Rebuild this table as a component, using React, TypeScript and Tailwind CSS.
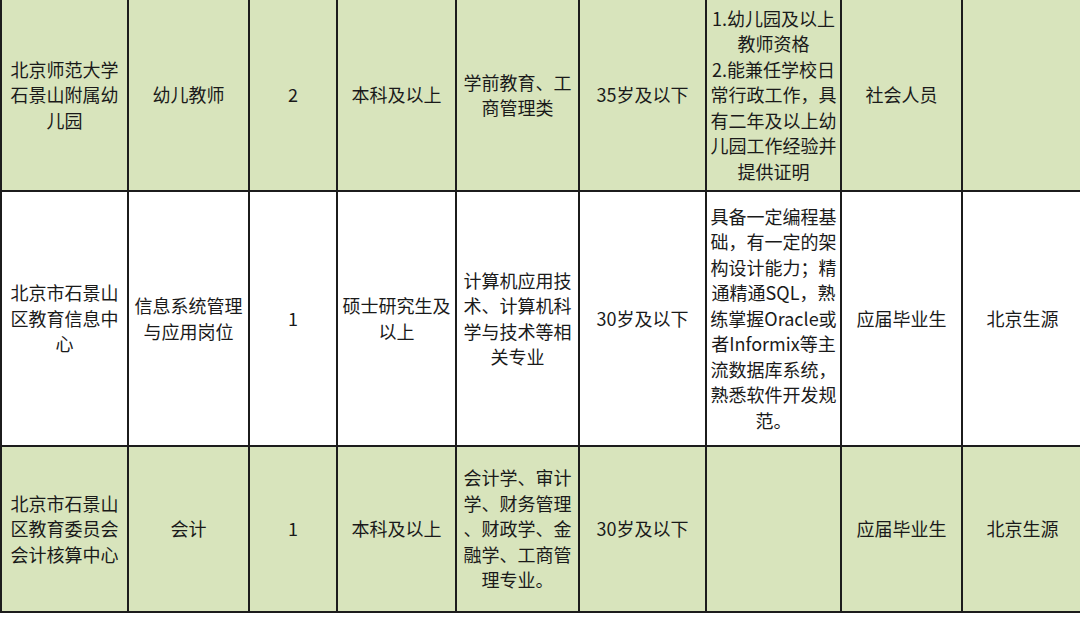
type Row = { green: boolean; cells: string[][] };

const rows: Row[] = [
  {
    green: true,
    cells: [
      ['北京师范大学', '石景山附属幼', '儿园'],
      ['幼儿教师'],
      ['2'],
      ['本科及以上'],
      ['学前教育、工', '商管理类'],
      ['35岁及以下'],
      ['1.幼儿园及以上', '教师资格', '2.能兼任学校日', '常行政工作，具', '有二年及以上幼', '儿园工作经验并', '提供证明'],
      ['社会人员'],
      [],
    ],
  },
  {
    green: false,
    cells: [
      ['北京市石景山', '区教育信息中', '心'],
      ['信息系统管理', '与应用岗位'],
      ['1'],
      ['硕士研究生及', '以上'],
      ['计算机应用技', '术、计算机科', '学与技术等相', '关专业'],
      ['30岁及以下'],
      ['具备一定编程基', '础，有一定的架', '构设计能力；精', '通精通SQL，熟', '练掌握Oracle或', '者Informix等主', '流数据库系统，', '熟悉软件开发规', '范。'],
      ['应届毕业生'],
      ['北京生源'],
    ],
  },
  {
    green: true,
    cells: [
      ['北京市石景山', '区教育委员会', '会计核算中心'],
      ['会计'],
      ['1'],
      ['本科及以上'],
      ['会计学、审计', '学、财务管理', '、财政学、金', '融学、工商管', '理专业。'],
      ['30岁及以下'],
      [],
      ['应届毕业生'],
      ['北京生源'],
    ],
  },
];

function Cell({ lines, green, last }: { lines: string[]; green: boolean; last: boolean }) {
  return (
    <div
      className={`flex flex-col items-center justify-center border-b-2 border-[#1c1c1c] text-center ${
        last ? '' : 'border-r-2'
      } ${green ? 'bg-[#d8e4bc]' : 'bg-white'}`}
    >
      {lines.map((line, i) => (
        <span key={i} className="whitespace-nowrap">
          {line}
        </span>
      ))}
    </div>
  );
}

export default function App() {
  return (
    <div className="h-[617px] w-[1080px] overflow-hidden bg-white">
      <div
        className="grid grid-cols-[127px_121px_88px_119px_123px_127px_135px_121px_119px] grid-rows-[192px_255px_166px] border-l-2 border-[#1c1c1c] text-[18px] leading-[25.5px] text-[#1a1a1a]"
        style={{ fontFamily: '"Noto Sans CJK SC", "Noto Sans", sans-serif' }}
      >
        {rows.map((row, r) =>
          row.cells.map((lines, c) => (
            <Cell key={`${r}-${c}`} lines={lines} green={row.green} last={c === row.cells.length - 1} />
          ))
        )}
      </div>
    </div>
  );
}
